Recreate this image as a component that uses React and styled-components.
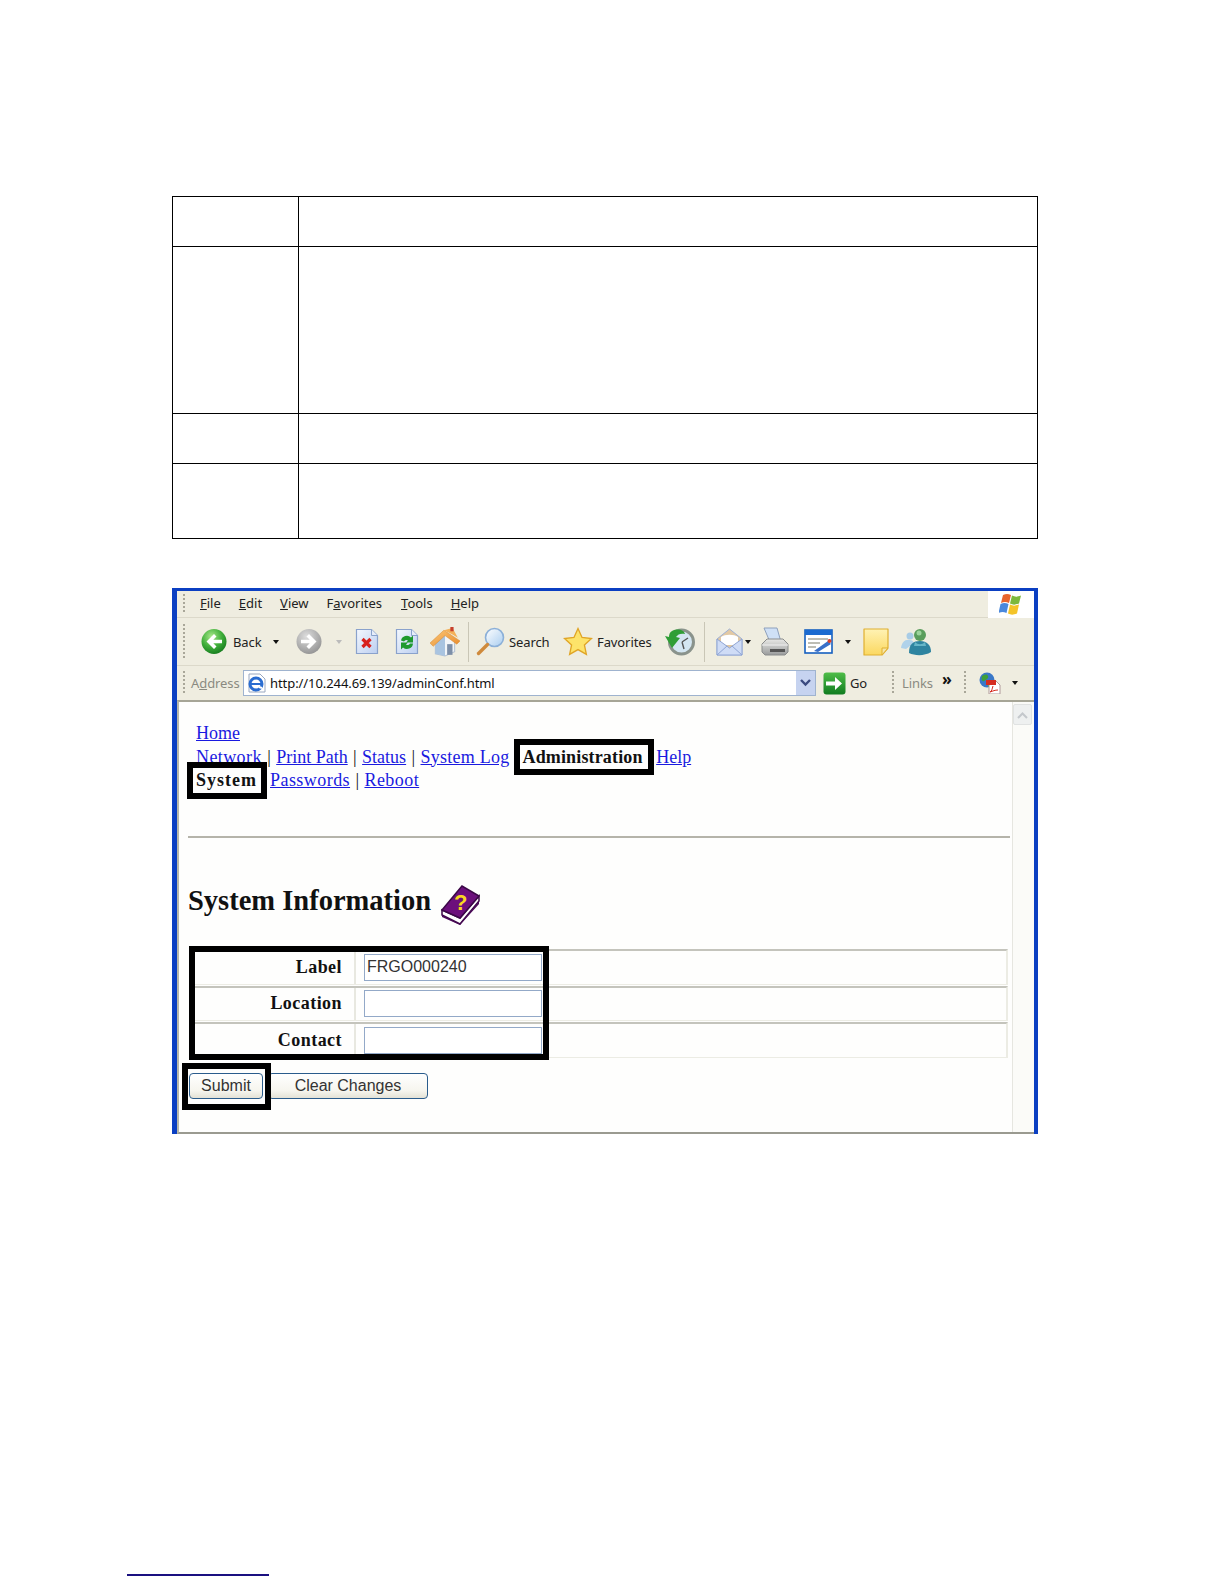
import React from 'react';
import styled, { createGlobalStyle } from 'styled-components';

const GlobalStyle = createGlobalStyle`
  html, body {
    margin: 0;
    background: #fff;
    font-family: 'Liberation Serif', serif;
  }
`;

const Page = styled.div`
  width: 866px;
  padding: 196px 0 0 172px;
  height: 1388px;
  position: relative;
`;

const SpecTable = styled.table`
  width: 100%;
  border-collapse: collapse;
  table-layout: fixed;
  td {
    border: 1.3px solid #000;
    padding: 0;
  }
  td:first-child {
    width: 125px;
  }
`;

const SpecRow = styled.tr`
  height: ${({ $h }) => $h}px;
`;

const BrowserWindow = styled.div`
  margin-top: 49px;
  height: 546px;
  box-sizing: border-box;
  display: flex;
  flex-direction: column;
  border-top: 3px solid #0b3fc2;
  border-left: 5px solid #0b3fc2;
  border-right: 4px solid #0b3fc2;
  background: #efede0;
  font-family: 'Noto Sans', sans-serif;
  font-size: 13px;
  color: #222;
`;

const MenuBar = styled.div`
  height: 27px;
  flex: none;
  display: flex;
  align-items: center;
  border-bottom: 1px solid #dcd9ca;
  box-sizing: border-box;
  padding-left: 6px;
`;

const Grip = styled.i`
  flex: none;
  display: block;
  width: 2px;
  height: ${({ $h }) => $h || 20}px;
  margin-left: ${({ $ml }) => $ml || 0}px;
  background: repeating-linear-gradient(to bottom, #a9a799 0 2px, transparent 2px 4px);
`;

const MenuItem = styled.span`
  margin: 0 0 2px ${({ $ml }) => $ml}px;
  font-size: 13px;
`;

const FlagCell = styled.div`
  margin-left: auto;
  width: 46px;
  height: 27px;
  background: #fff;
  display: flex;
  align-items: center;
  justify-content: center;
`;

const Toolbar = styled.div`
  height: 48px;
  flex: none;
  display: flex;
  align-items: center;
  padding-left: 6px;
  border-bottom: 1px solid #dcd9ca;
  box-sizing: border-box;
`;

const ToolSlot = styled.div`
  flex: none;
  width: ${({ $w }) => $w}px;
  margin-left: ${({ $ml }) => $ml}px;
  display: flex;
  align-items: center;
  justify-content: center;
  white-space: nowrap;
  color: ${({ $muted }) => ($muted ? '#8a8a80' : '#222')};
`;

const ToolLabel = styled(ToolSlot)`
  justify-content: flex-start;
  letter-spacing: -0.1px;
`;

const ToolSep = styled.i`
  flex: none;
  width: 1px;
  height: 40px;
  margin-left: ${({ $ml }) => $ml}px;
  background: #c9c6b6;
`;

const Caret = styled.i`
  flex: none;
  width: 0;
  height: 0;
  margin-left: ${({ $ml }) => $ml}px;
  border: 3.5px solid transparent;
  border-top: 4px solid ${({ $muted }) => ($muted ? '#bbb' : '#111')};
  border-bottom: 0;
`;

const AddressBar = styled.div`
  height: 34px;
  flex: none;
  display: flex;
  align-items: center;
  padding-left: 6px;
`;

const AddressField = styled.div`
  flex: none;
  width: 573px;
  height: 26px;
  margin-left: 7px;
  box-sizing: border-box;
  border: 1.5px solid #9fb3cf;
  background: #fff;
  display: flex;
  align-items: center;
  padding-left: 3px;
  gap: 3px;
  font-size: 13px;
  letter-spacing: -0.07px;
  color: #111;
`;

const DropButton = styled.div`
  margin-left: auto;
  width: 19px;
  height: 100%;
  background: #c6d3f0;
  display: flex;
  align-items: center;
  justify-content: center;
`;

const Chevrons = styled.b`
  margin-bottom: 8px;
  font-size: 16px;
  color: #111;
`;

const ContentArea = styled.div`
  flex: 1;
  display: flex;
  min-height: 0;
  background: #fefefd;
  border-top: 2px solid #a6a596;
  border-bottom: 2px solid #9a9a90;
  border-left: 2px solid #b8b7a8;
`;

const Main = styled.div`
  flex: 1;
  min-width: 0;
  padding: 20px 0 0 9px;
  font-family: 'Liberation Serif', serif;
`;

const Scrollbar = styled.div`
  width: 21px;
  flex: none;
  border-left: 1px solid #e6e6e0;
  background: #fbfbf8;
`;

const ScrollUp = styled.div`
  height: 19px;
  margin: 2px 2px 0 0;
  border-radius: 2px;
  background: #eef0f0;
  border: 1px solid #e0e2e2;
  display: flex;
  align-items: center;
  justify-content: center;
`;

const Nav = styled.nav`
  padding-left: 8px;
  font-size: 18px;
  line-height: 23.5px;
  color: #111;
  height: 114px;
`;

const NavLink = styled.a`
  color: #1a1ae0;
  text-decoration: underline;
  letter-spacing: ${({ $track }) => $track || 0}px;
`;

const Bar = styled.span`
  margin: 0 0.9px;
`;

const Boxed = styled.b`
  position: relative;
  margin: 0 ${({ $mr }) => $mr}px 0 ${({ $ml }) => $ml}px;
  color: #111;
  letter-spacing: ${({ $track }) => $track}px;
  &::after {
    content: '';
    position: absolute;
    top: -8px;
    bottom: -8.5px;
    left: -9px;
    right: ${({ $pad }) => $pad}px;
    border: 6px solid #000;
  }
`;

const Rule = styled.hr`
  margin: 0;
  width: 822px;
  border: 0;
  border-top: 2px solid #b5b4aa;
`;

const Heading = styled.h1`
  margin: 43px 0 0;
  height: 40px;
  display: flex;
  align-items: center;
  gap: 9px;
  font-size: 28.5px;
  font-weight: bold;
  color: #111;
`;

const FormWrap = styled.div`
  position: relative;
  margin: 28px 0 0 2px;
  width: 818px;
`;

const FormRow = styled.div`
  height: 35.5px;
  margin-bottom: 1px;
  box-sizing: border-box;
  display: flex;
  border-top: 2px solid #c4c4bc;
  border-right: 2px solid #ecece4;
  border-bottom: 1px solid #ecece4;
`;

const LabelCell = styled.label`
  width: 152px;
  padding-right: 12px;
  flex: none;
  border-right: 2px solid #e8e8e0;
  display: flex;
  align-items: center;
  justify-content: flex-end;
  font-size: 18px;
  font-weight: bold;
  letter-spacing: 0.45px;
  color: #111;
`;

const InputCell = styled.div`
  padding-left: 8px;
  display: flex;
  align-items: center;
`;

const TextBox = styled.input`
  width: 178px;
  height: 27px;
  box-sizing: border-box;
  border: 1.5px solid #93a9c8;
  padding: 0 2px;
  margin: 0;
  background: #fff;
  font-family: 'Liberation Sans', sans-serif;
  font-size: 16px;
  color: #333;
  outline: none;
`;

const FormHighlight = styled.div`
  position: absolute;
  top: -3px;
  left: -1px;
  width: 360px;
  height: 114px;
  box-sizing: border-box;
  border: 6px solid #000;
  pointer-events: none;
`;

const ButtonRow = styled.div`
  position: relative;
  display: flex;
  gap: 5px;
  margin: 15px 0 0 1px;
`;

const FormButton = styled.button`
  width: ${({ $w }) => $w}px;
  height: 26px;
  padding: 0;
  border: 1.5px solid #2a5c8c;
  border-radius: 4px;
  background: linear-gradient(to bottom, #fff 0%, #f6f5ee 70%, #e4e2d6 100%);
  font-family: 'Liberation Sans', sans-serif;
  font-size: 16px;
  color: #333;
`;

const SubmitHighlight = styled.div`
  position: absolute;
  top: -10px;
  left: -7px;
  width: 89px;
  height: 47px;
  box-sizing: border-box;
  border: 6px solid #000;
  pointer-events: none;
`;

const FooterRule = styled.div`
  position: absolute;
  left: 127px;
  top: 1574px;
  width: 142px;
  height: 2px;
  background: #1a1080;
`;

const Svg = ({ size = 26, h, vb = '0 0 26 26', children }) => (
  <svg width={size} height={h || size} viewBox={vb} style={{ display: 'block' }}>{children}</svg>
);

const Gradients = () => (
  <svg width="0" height="0" style={{ position: 'absolute' }}>
    <defs>
      <radialGradient id="green" cx="40%" cy="30%" r="75%">
        <stop offset="0" stopColor="#a8e88a" />
        <stop offset="0.55" stopColor="#3fae3a" />
        <stop offset="1" stopColor="#14791d" />
      </radialGradient>
      <radialGradient id="grey" cx="40%" cy="30%" r="75%">
        <stop offset="0" stopColor="#dedede" />
        <stop offset="1" stopColor="#929292" />
      </radialGradient>
      <linearGradient id="paper" x1="0" y1="0" x2="1" y2="1">
        <stop offset="0" stopColor="#f4f8ff" />
        <stop offset="1" stopColor="#bccff0" />
      </linearGradient>
      <linearGradient id="sticky" x1="0" y1="0" x2="0" y2="1">
        <stop offset="0" stopColor="#fff2b4" />
        <stop offset="1" stopColor="#fbd860" />
      </linearGradient>
      <linearGradient id="lens" x1="0" y1="0" x2="1" y2="1">
        <stop offset="0" stopColor="#fff" />
        <stop offset="1" stopColor="#a9cdf0" />
      </linearGradient>
      <linearGradient id="goFill" x1="0" y1="0" x2="0" y2="1">
        <stop offset="0" stopColor="#4fbd48" />
        <stop offset="1" stopColor="#107c20" />
      </linearGradient>
      <linearGradient id="roof" x1="0" y1="0" x2="1" y2="1">
        <stop offset="0" stopColor="#fbc878" />
        <stop offset="1" stopColor="#e88a2c" />
      </linearGradient>
      <linearGradient id="steel" x1="0" y1="0" x2="0" y2="1">
        <stop offset="0" stopColor="#e8e8e6" />
        <stop offset="1" stopColor="#9a9c9c" />
      </linearGradient>
    </defs>
  </svg>
);

const RoundArrow = ({ fill, dir }) => (
  <Svg size={27} vb="0 0 26 26">
    <circle cx="13" cy="13" r="12.5" fill={`url(#${fill})`} />
    <path
      d={dir === 'left'
        ? 'M13 5.500 5.500 13l7.500 7.500 2.500-2.500-3.200-3.200H21v-3.600h-8.700L15.500 8z'
        : 'M13 5.500 20.500 13 13 20.500 10.500 18l3.200-3.200H5v-3.600h8.700L10.500 8z'}
      fill="#fff"
    />
  </Svg>
);

const PageIcon = ({ children }) => (
  <Svg size={24} h={27} vb="0 0 24 26">
    <path d="M1.500 1h15l6 6v18h-21z" fill="url(#paper)" stroke="#8aa2cc" strokeWidth="1.200" />
    <path d="M16.500 1v6h6" fill="#e6edf9" stroke="#8aa2cc" strokeWidth="1" />
    {children}
  </Svg>
);

const HomeIcon = () => (
  <Svg size={30} vb="0 0 28 28">
    <path d="M5 14v11l9 2 9-4V13L14 6z" fill="#f2f5f8" stroke="#b4c0d0" />
    <path d="M5 14v11l9 2V6z" fill="#a9c4e0" />
    <path d="M0 15 13 3l15 10-3 3-11-8L3 18z" fill="url(#roof)" stroke="#d88a34" strokeWidth=".5" />
    <path d="M13 3 21 1l5 9-5-3z" fill="#f4b058" />
    <rect x="19" y="0" width="3" height="4" fill="#c6402c" />
    <rect x="16" y="16" width="5" height="10" fill="#7d8fa8" />
  </Svg>
);

const SearchIcon = () => (
  <Svg size={29} vb="0 0 29 29">
    <circle cx="18.500" cy="10.500" r="9" fill="url(#lens)" stroke="#8cb0d8" strokeWidth="1.600" />
    <path d="M11.500 17.500 2.500 26.500" stroke="#cf8a3c" strokeWidth="3.400" strokeLinecap="round" />
  </Svg>
);

const StarIcon = () => (
  <Svg size={30} vb="0 0 29 29">
    <path
      d="M14.500 1.500l3.900 8.600 9.100 1-6.800 6.200 1.900 9.200-8.100-4.700-8.100 4.700 1.900-9.200-6.800-6.200 9.100-1z"
      fill="#fde36a"
      stroke="#e0a526"
      strokeWidth="1.300"
    />
  </Svg>
);

const HistoryIcon = () => (
  <Svg size={30} vb="0 0 30 30">
    <circle cx="16.500" cy="15" r="12" fill="#d4e6f2" stroke="#8a938c" strokeWidth="3" />
    <path d="M17 15l6-4M17 15l2 7" stroke="#555" strokeWidth="1.400" />
    <path d="M7 4c6-3 12-1 13 3-4-1-7 0-9 3l4 1-8 10-7-12 4 1c0-3 1-5 3-6z" fill="#2f9e36" />
  </Svg>
);

const MailIcon = () => (
  <Svg size={27} h={29} vb="0 0 27 29">
    <path d="M1 12 13.500 2 26 12v16H1z" fill="#e2c9a4" stroke="#9db1d8" />
    <path d="M5 10c4-3 13-3 17 0v8H5z" fill="#fff" />
    <path d="M1 12l12.500 9L26 12v16H1z" fill="#cfdcf6" stroke="#8fa5d4" />
    <path d="M1 28l10-9M26 28l-10-9" stroke="#8fa5d4" />
  </Svg>
);

const PrinterIcon = () => (
  <Svg size={30} vb="0 0 30 30">
    <path d="M4 1h13l4 14H10z" fill="#cfe0f6" stroke="#8ea0bc" />
    <path d="M2 17l5-5h16l5 5v8l-3 3H5l-3-3z" fill="url(#steel)" stroke="#8a8c8c" />
    <path d="M10 22h15v3H10z" fill="#555" />
    <path d="M2 18h26" stroke="#f2f2f2" />
  </Svg>
);

const EditIcon = () => (
  <Svg size={29} h={25} vb="0 0 29 25">
    <rect x="1" y="1" width="27" height="23" fill="#fff" stroke="#1660c0" strokeWidth="1.600" />
    <rect x="1" y="1" width="27" height="5" fill="#1a6ad0" />
    <path d="M4 10h20M4 14h12M4 18h8" stroke="#a8a89c" strokeWidth="1.400" />
    <path d="M10 22 24 12l3 3-13 8z" fill="#3a70c8" />
    <circle cx="25.500" cy="12" r="2" fill="#d8402c" />
  </Svg>
);

const NoteIcon = () => (
  <Svg size={28} vb="0 0 28 28">
    <path d="M2 1h24v19l-6 7H2z" fill="url(#sticky)" stroke="#e0b030" strokeWidth="1.200" strokeLinejoin="round" />
    <path d="M26 20h-6v7z" fill="#f6e6a8" stroke="#e0b030" />
  </Svg>
);

const MessengerIcon = () => (
  <Svg size={30} h={28} vb="0 0 30 28">
    <circle cx="9" cy="8" r="3.500" fill="#a8cce6" />
    <path d="M0 20c1-6 4-9 9-8 2 0 3 1 4 3l-8 6z" fill="#b0d2ea" />
    <circle cx="19" cy="7" r="6" fill="#5a9e5c" />
    <circle cx="18" cy="5" r="2.500" fill="#9cd49c" />
    <path d="M8 25c0-9 4-12 11-12s11 4 11 11c-6 4-16 4-22 1z" fill="#2e84a0" />
    <path d="M14 14c3 3 7 3 10 0l1 4H13z" fill="#66b6c8" />
  </Svg>
);

const WindowsFlag = () => (
  <Svg size={24} h={22} vb="0 0 24 22">
    <path d="M4 2c3-1.500 5-1.500 8 0l-2 8c-3-1.500-5-1.500-8 0z" fill="#e8642c" />
    <path d="M13 2.500c3 1.500 5 1.500 9 0l-2 8c-4 1.500-6 1.500-9 0z" fill="#7cb83c" />
    <path d="M1.500 11c3-1.500 5-1.500 8 0l-2 9c-3-1.500-5-1.500-8 0z" fill="#4a88dc" />
    <path d="M11 11.500c3 1.500 5 1.500 9 0l-2 9c-4 1.500-6 1.500-9 0z" fill="#f4c428" />
  </Svg>
);

const IeIcon = () => (
  <Svg size={20} vb="0 0 20 20">
    <path d="M2 1h11l5 5v13H2z" fill="#fff" stroke="#9aa8c0" />
    <circle cx="9" cy="11" r="6" fill="none" stroke="#2a6cd0" strokeWidth="3" />
    <path d="M4 11h10" stroke="#2a6cd0" strokeWidth="2" />
    <path d="M12 14l3 1" stroke="#fff" strokeWidth="2" />
  </Svg>
);

const GoIcon = () => (
  <Svg size={23} vb="0 0 23 23">
    <rect x=".5" y=".5" width="22" height="22" rx="3" fill="url(#goFill)" />
    <path d="M3 9.500h9V5l7 6.500-7 6.500v-4.500H3z" fill="#fff" />
  </Svg>
);

const GlobePdfIcon = () => (
  <Svg size={22} vb="0 0 22 22">
    <circle cx="8" cy="8" r="7.500" fill="#3a78c8" />
    <path d="M3 4c3-2 5-2 6 0s-2 4-4 5-3-2-2-5zM9 9c3 0 4 2 3 5l-3 1z" fill="#3fa03a" />
    <path d="M10 9h7l4 4v9H10z" fill="#fff" stroke="#b09a9a" />
    <path d="M7 8h10v5H7z" fill="#d62c20" />
    <path d="M14 14c-1 3-1 5-3 6 3-1 5-2 8-2" fill="none" stroke="#d62c20" />
  </Svg>
);

const BookIcon = () => (
  <svg width="41" height="40" viewBox="0 0 41 40" style={{ display: 'block', marginTop: '7px' }}>
    <path d="M2 25v5l18 9 19-23v-5L20 33z" fill="#fff" stroke="#3c0848" strokeWidth="1.500" />
    <path d="M2 25 22 1l17 10-19 22z" fill="#6c0f7c" stroke="#3c0848" strokeWidth="1.500" />
    <path d="M2 30l18 9 19-23v3L20 40 2 32z" fill="#4b0a58" />
    <text x="14" y="25" fontFamily="Liberation Sans, sans-serif" fontWeight="bold" fontSize="22" fill="#f8d820">?</text>
  </svg>
);

const App = () => (
  <Page>
    <GlobalStyle />
    <Gradients />
    <SpecTable>
      <tbody>
        <SpecRow $h={50}><td /><td /></SpecRow>
        <SpecRow $h={167}><td /><td /></SpecRow>
        <SpecRow $h={50}><td /><td /></SpecRow>
        <SpecRow $h={75}><td /><td /></SpecRow>
      </tbody>
    </SpecTable>

    <BrowserWindow>
      <MenuBar>
        <Grip />
        <MenuItem $ml={15}><u>F</u>ile</MenuItem>
        <MenuItem $ml={18}><u>E</u>dit</MenuItem>
        <MenuItem $ml={18}><u>V</u>iew</MenuItem>
        <MenuItem $ml={18}>F<u>a</u>vorites</MenuItem>
        <MenuItem $ml={19}><u>T</u>ools</MenuItem>
        <MenuItem $ml={18}><u>H</u>elp</MenuItem>
        <FlagCell><WindowsFlag /></FlagCell>
      </MenuBar>

      <Toolbar>
        <Grip $h={36} />
        <ToolSlot $w={26} $ml={16}><RoundArrow fill="green" dir="left" /></ToolSlot>
        <ToolLabel $w={32} $ml={6}>Back</ToolLabel>
        <Caret $ml={8} />
        <ToolSlot $w={26} $ml={17}><RoundArrow fill="grey" dir="right" /></ToolSlot>
        <Caret $ml={14} $muted />
        <ToolSlot $w={24} $ml={13}>
          <PageIcon><path d="M7.500 10.500l8 8M15.500 10.500l-8 8" stroke="#d8201c" strokeWidth="3.200" /></PageIcon>
        </ToolSlot>
        <ToolSlot $w={24} $ml={16}>
          <PageIcon>
            <path d="M6 12a6 6 0 0 1 10-3l2-2v7h-7l2-2a3 3 0 0 0-4 1z" fill="#1f9a2f" />
            <path d="M18 15a6 6 0 0 1-10 4l-2 2v-7h7l-2 2a3 3 0 0 0 4-1z" fill="#1f9a2f" />
          </PageIcon>
        </ToolSlot>
        <ToolSlot $w={30} $ml={11}><HomeIcon /></ToolSlot>
        <ToolSep $ml={8} />
        <ToolSlot $w={29} $ml={7}><SearchIcon /></ToolSlot>
        <ToolLabel $w={44} $ml={4}>Search</ToolLabel>
        <ToolSlot $w={30} $ml={10}><StarIcon /></ToolSlot>
        <ToolLabel $w={58} $ml={4}>Favorites</ToolLabel>
        <ToolSlot $w={30} $ml={10}><HistoryIcon /></ToolSlot>
        <ToolSep $ml={9} />
        <ToolSlot $w={27} $ml={11}><MailIcon /></ToolSlot>
        <Caret $ml={2} />
        <ToolSlot $w={30} $ml={9}><PrinterIcon /></ToolSlot>
        <ToolSlot $w={29} $ml={14}><EditIcon /></ToolSlot>
        <Caret $ml={12} />
        <ToolSlot $w={28} $ml={11}><NoteIcon /></ToolSlot>
        <ToolSlot $w={30} $ml={11}><MessengerIcon /></ToolSlot>
      </Toolbar>

      <AddressBar>
        <Grip $h={24} />
        <ToolLabel $w={45} $ml={6} $muted>A<u>d</u>dress</ToolLabel>
        <AddressField>
          <IeIcon />
          <span>http://10.244.69.139/adminConf.html</span>
          <DropButton>
            <svg width="11" height="8" viewBox="0 0 11 8"><path d="M1 1l4.500 4.500L10 1" fill="none" stroke="#3a4a80" strokeWidth="2.400" /></svg>
          </DropButton>
        </AddressField>
        <ToolSlot $w={23} $ml={7}><GoIcon /></ToolSlot>
        <ToolLabel $w={24} $ml={4}>Go</ToolLabel>
        <Grip $h={24} $ml={18} />
        <ToolLabel $w={32} $ml={8} $muted>Links</ToolLabel>
        <ToolSlot $w={10} $ml={8}><Chevrons>»</Chevrons></ToolSlot>
        <Grip $h={24} $ml={12} />
        <ToolSlot $w={22} $ml={13}><GlobePdfIcon /></ToolSlot>
        <Caret $ml={11} />
      </AddressBar>

      <ContentArea>
        <Main>
          <Nav>
            <div><NavLink href="#home">Home</NavLink></div>
            <div>
              <NavLink href="#network" $track={0.4}>Network</NavLink> <Bar>|</Bar> <NavLink href="#print">Print Path</NavLink> <Bar>|</Bar> <NavLink href="#status">Status</NavLink> <Bar>|</Bar> <NavLink href="#log" $track={0.25}>System Log</NavLink>
              <Boxed $ml={13} $mr={13.5} $track={0.15} $pad={-11}>Administration</Boxed>
              <NavLink href="#help">Help</NavLink>
            </div>
            <div>
              <Boxed $ml={0} $mr={13} $track={1} $pad={-10}>System</Boxed>
              <NavLink href="#passwords" $track={0.45}>Passwords</NavLink> <Bar>|</Bar> <NavLink href="#reboot" $track={0.45}>Reboot</NavLink>
            </div>
          </Nav>
          <Rule />
          <Heading>System Information <BookIcon /></Heading>
          <FormWrap>
            <FormRow>
              <LabelCell>Label</LabelCell>
              <InputCell><TextBox defaultValue="FRGO000240" /></InputCell>
            </FormRow>
            <FormRow>
              <LabelCell>Location</LabelCell>
              <InputCell><TextBox /></InputCell>
            </FormRow>
            <FormRow>
              <LabelCell>Contact</LabelCell>
              <InputCell><TextBox /></InputCell>
            </FormRow>
            <FormHighlight />
          </FormWrap>
          <ButtonRow>
            <FormButton $w={74}>Submit</FormButton>
            <FormButton $w={160}>Clear Changes</FormButton>
            <SubmitHighlight />
          </ButtonRow>
        </Main>
        <Scrollbar>
          <ScrollUp>
            <svg width="11" height="8" viewBox="0 0 11 8"><path d="M1 7l4.500-4.500L10 7" fill="none" stroke="#c4c8cc" strokeWidth="2" /></svg>
          </ScrollUp>
        </Scrollbar>
      </ContentArea>
    </BrowserWindow>
    <FooterRule />
  </Page>
);

export default App;
